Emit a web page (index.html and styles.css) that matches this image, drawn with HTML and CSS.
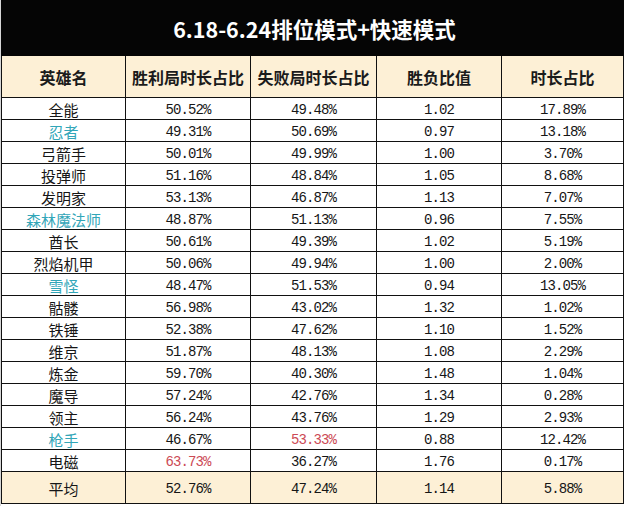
FILE: index.html
```html
<!DOCTYPE html>
<html lang="zh">
<head>
<meta charset="utf-8">
<title>6.18-6.24排位模式+快速模式</title>
<link rel="stylesheet" href="styles.css">
</head>
<body>
<div class="sheet">
  <div class="title">6.18-6.24排位模式+快速模式</div>
  <div class="grid">
    <div class="cell head">英雄名</div>
    <div class="cell head">胜利局时长占比</div>
    <div class="cell head">失败局时长占比</div>
    <div class="cell head">胜负比值</div>
    <div class="cell head">时长占比</div>

    <div class="cell name">全能</div><div class="cell num">50.52%</div><div class="cell num">49.48%</div><div class="cell num">1.02</div><div class="cell num">17.89%</div>
    <div class="cell name cyan">忍者</div><div class="cell num">49.31%</div><div class="cell num">50.69%</div><div class="cell num">0.97</div><div class="cell num">13.18%</div>
    <div class="cell name">弓箭手</div><div class="cell num">50.01%</div><div class="cell num">49.99%</div><div class="cell num">1.00</div><div class="cell num">3.70%</div>
    <div class="cell name">投弹师</div><div class="cell num">51.16%</div><div class="cell num">48.84%</div><div class="cell num">1.05</div><div class="cell num">8.68%</div>
    <div class="cell name">发明家</div><div class="cell num">53.13%</div><div class="cell num">46.87%</div><div class="cell num">1.13</div><div class="cell num">7.07%</div>
    <div class="cell name cyan">森林魔法师</div><div class="cell num">48.87%</div><div class="cell num">51.13%</div><div class="cell num">0.96</div><div class="cell num">7.55%</div>
    <div class="cell name">酋长</div><div class="cell num">50.61%</div><div class="cell num">49.39%</div><div class="cell num">1.02</div><div class="cell num">5.19%</div>
    <div class="cell name">烈焰机甲</div><div class="cell num">50.06%</div><div class="cell num">49.94%</div><div class="cell num">1.00</div><div class="cell num">2.00%</div>
    <div class="cell name cyan">雪怪</div><div class="cell num">48.47%</div><div class="cell num">51.53%</div><div class="cell num">0.94</div><div class="cell num">13.05%</div>
    <div class="cell name">骷髅</div><div class="cell num">56.98%</div><div class="cell num">43.02%</div><div class="cell num">1.32</div><div class="cell num">1.02%</div>
    <div class="cell name">铁锤</div><div class="cell num">52.38%</div><div class="cell num">47.62%</div><div class="cell num">1.10</div><div class="cell num">1.52%</div>
    <div class="cell name">维京</div><div class="cell num">51.87%</div><div class="cell num">48.13%</div><div class="cell num">1.08</div><div class="cell num">2.29%</div>
    <div class="cell name">炼金</div><div class="cell num">59.70%</div><div class="cell num">40.30%</div><div class="cell num">1.48</div><div class="cell num">1.04%</div>
    <div class="cell name">魔导</div><div class="cell num">57.24%</div><div class="cell num">42.76%</div><div class="cell num">1.34</div><div class="cell num">0.28%</div>
    <div class="cell name">领主</div><div class="cell num">56.24%</div><div class="cell num">43.76%</div><div class="cell num">1.29</div><div class="cell num">2.93%</div>
    <div class="cell name cyan">枪手</div><div class="cell num">46.67%</div><div class="cell num red">53.33%</div><div class="cell num">0.88</div><div class="cell num">12.42%</div>
    <div class="cell name">电磁</div><div class="cell num red">63.73%</div><div class="cell num">36.27%</div><div class="cell num">1.76</div><div class="cell num">0.17%</div>

    <div class="cell name avg">平均</div><div class="cell num avg">52.76%</div><div class="cell num avg">47.24%</div><div class="cell num avg">1.14</div><div class="cell num avg">5.88%</div>
  </div>
</div>
</body>
</html>
```

FILE: styles.css
```css
html, body {
  margin: 0;
  padding: 0;
  background: #ffffff;
}

body {
  width: 627px;
  height: 506px;
  overflow: hidden;
  border-left: 1px solid #d6d6d6;
  box-sizing: border-box;
}

.sheet {
  width: 623px;
}

.title {
  height: 56px;
  background: #050505;
  color: #ffffff;
  font-family: "Noto Sans CJK SC", "Noto Sans", sans-serif;
  font-weight: 700;
  font-size: 21.5px;
  display: flex;
  align-items: center;
  justify-content: center;
  padding-left: 4px;
  box-sizing: border-box;
  letter-spacing: 0;
}

.grid {
  display: grid;
  grid-template-columns: 124px 125px 126px 125px 122px;
  grid-template-rows: 42px repeat(17, 22px) 32px;
  border-left: 1px solid #111;
}

.cell {
  border-right: 1px solid #111;
  border-bottom: 1px solid #111;
  box-sizing: border-box;
  display: flex;
  align-items: center;
  justify-content: center;
  color: #161616;
  background: #ffffff;
  white-space: nowrap;
}

.head {
  background: #fdf0d6;
  font-family: "Noto Sans CJK SC", sans-serif;
  font-weight: 700;
  font-size: 16px;
  color: #1b1b1b;
  padding-top: 1px;
}

.name {
  font-family: "Noto Sans CJK SC", sans-serif;
  font-size: 15px;
  padding-top: 1px;
}

.num {
  font-family: "Liberation Mono", monospace;
  font-size: 14px;
  letter-spacing: -0.9px;
  padding-top: 2px;
}

.cyan {
  color: #32a6b8;
}

.red {
  color: #cc4a55;
}

.avg {
  background: #fdf0d6;
}
```
